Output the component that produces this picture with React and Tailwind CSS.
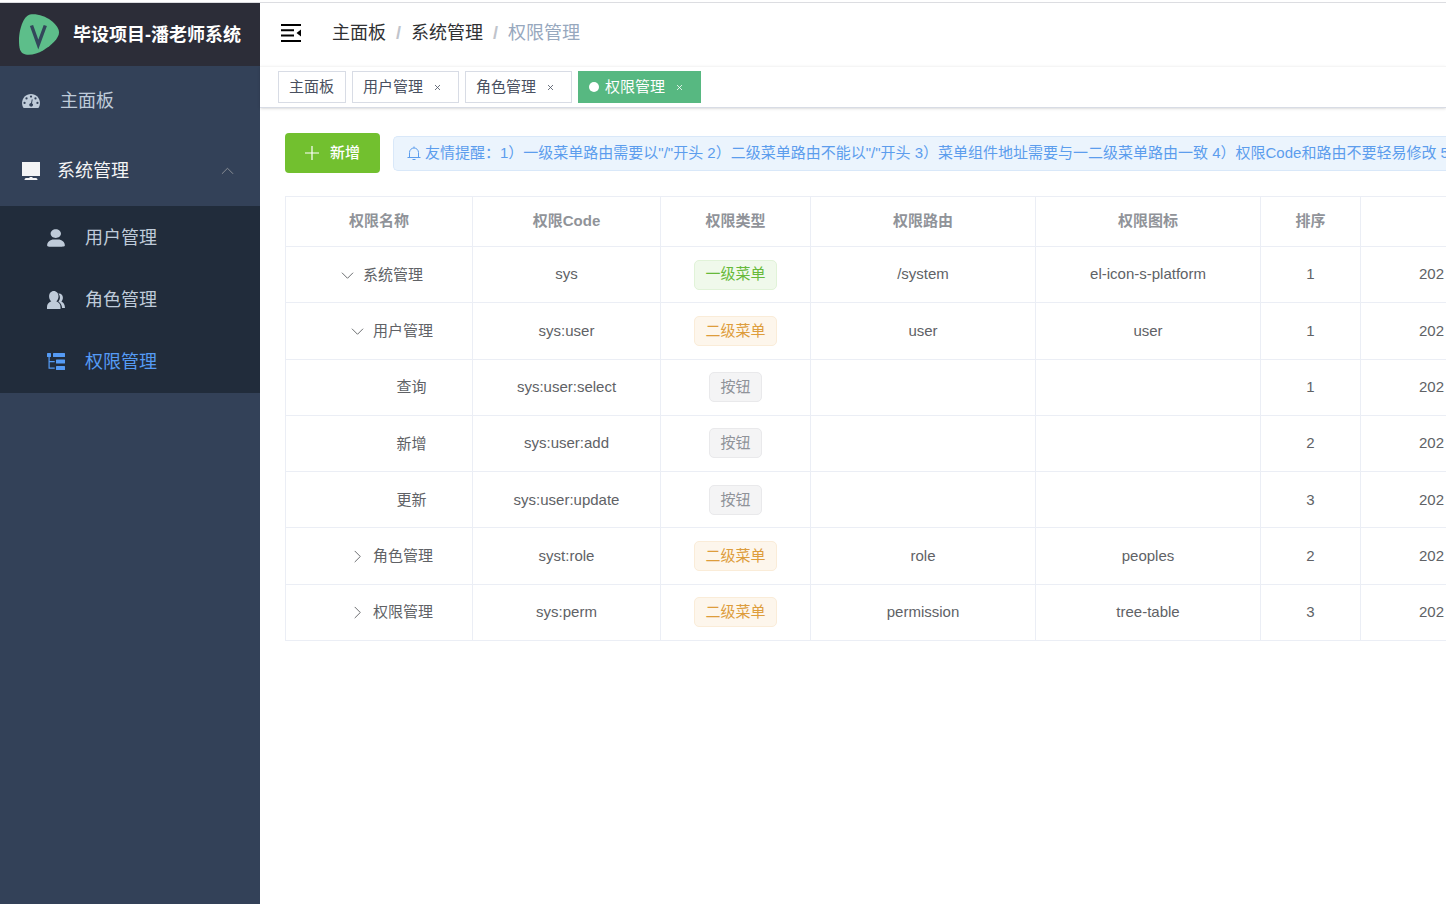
import React, { useState } from 'react';

const subMenus = [
  { name: '用户管理', icon: 'user' },
  { name: '角色管理', icon: 'peoples' },
  { name: '权限管理', icon: 'tree' },
];

const tags = [
  { name: '主面板', affix: true },
  { name: '用户管理' },
  { name: '角色管理' },
  { name: '权限管理' },
];

const permissions = [
  { id: 1, level: 0, open: true, name: '系统管理', code: 'sys', type: 1, path: '/system', icon: 'el-icon-s-platform', sort: 1 },
  { id: 2, level: 1, open: true, name: '用户管理', code: 'sys:user', type: 2, path: 'user', icon: 'user', sort: 1 },
  { id: 3, level: 2, name: '查询', code: 'sys:user:select', type: 3, sort: 1 },
  { id: 4, level: 2, name: '新增', code: 'sys:user:add', type: 3, sort: 2 },
  { id: 5, level: 2, name: '更新', code: 'sys:user:update', type: 3, sort: 3 },
  { id: 6, level: 1, open: false, name: '角色管理', code: 'syst:role', type: 2, path: 'role', icon: 'peoples', sort: 2 },
  { id: 7, level: 1, open: false, name: '权限管理', code: 'sys:perm', type: 2, path: 'permission', icon: 'tree-table', sort: 3 },
];

const types = {
  1: { label: '一级菜单', style: 'bg-[#f0f9eb] border-[#e1f3d8] text-[#67b93a]' },
  2: { label: '二级菜单', style: 'bg-[#fdf6ec] border-[#faecd8] text-[#dd9d3c]' },
  3: { label: '按钮', style: 'bg-[#f4f4f5] border-[#e9e9eb] text-[#909399]' },
};

const indents = ['', 'pl-5', 'pl-10'];

const Logo = () => (
  <svg viewBox="0 0 42 42" className="w-[42px] h-[42px] shrink-0">
    <path
      d="M12 .5C19-.5 27 2 33 6.500c4.500 3.500 8 7.500 8 12C41 24 34 31 25 36.500 19 40 10 42.500 5 39.500 1 37 1 31 1 25 1 17 5 2 12 .5z"
      fill="#5dbe8a"
    />
    <path d="M13.500 11.500L20.300 30.500 27.300 11.500" fill="none" stroke="#33475b" strokeWidth="3.400" />
  </svg>
);

const DashboardIcon = () => (
  <svg viewBox="0 0 128 100" className="w-[18px] h-[14px] shrink-0">
    <path
      d="M64 0C29 0 0 28 0 64c0 12 3.500 24 10 34 1 1.500 2.500 2 4 2h100c1.500 0 3-.5 4-2 6.500-10 10-22 10-34C128 28 99 0 64 0z"
      fill="currentColor"
    />
    <g fill="#334158">
      <circle cx="18" cy="64" r="8" />
      <circle cx="32" cy="32" r="8" />
      <circle cx="64" cy="18" r="8" />
      <circle cx="96" cy="32" r="8" />
      <circle cx="110" cy="64" r="8" />
      <path d="M70 37l6 2-5 28c7 3 9 8 7 14-2 8-9 11-16 9-8-2-12-9-10-16 2-6 6-9 12-10z" />
    </g>
  </svg>
);

const PlatformIcon = () => (
  <svg viewBox="0 0 18 18" className="w-[18px] h-[18px] shrink-0" fill="currentColor">
    <path d="M0 0h18v14H0zM7.500 15h3v1h3.500c1 0 1.500 1 1.500 2h-13c0-1 .5-2 1.500-2h3.500z" />
  </svg>
);

const MenuIcon = ({ type }) => {
  if (type === 'user') {
    return (
      <svg viewBox="0 0 130 130" className="w-[18px] h-[18px] shrink-0" fill="currentColor">
        <path d="M63.444 64.996c20.633 0 37.359-14.308 37.359-31.953 0-17.649-16.726-31.952-37.359-31.952-20.631 0-37.360 14.303-37.360 31.952 0 17.645 16.729 31.953 37.360 31.953zM80.570 75.650H49.434c-26.652 0-48.260 18.477-48.260 41.270v2.664c0 9.316 21.608 9.325 48.260 9.325H80.570c26.649 0 48.256-.344 48.256-9.325v-2.663c0-22.794-21.605-41.271-48.256-41.271z" />
      </svg>
    );
  }
  if (type === 'peoples') {
    return (
      <svg viewBox="0 0 18 18" className="w-[18px] h-[18px] shrink-0" fill="currentColor">
        <path d="M6.800 0c2.700 0 4.700 2.400 4.700 5.400 0 2-.9 3.800-2.200 4.800 2.600.9 4.200 3 4.200 5.800v2H0v-2c0-2.800 1.600-4.900 4.300-5.800C3 9.200 2.100 7.400 2.100 5.400 2.100 2.400 4.100 0 6.800 0z" />
        <path d="M11.300 2.600c3-.2 4.600 1.600 4.600 4.100 0 1.500-.6 2.800-1.500 3.700 2.100.9 3.600 3.200 3.600 6.600h-2.900c-.2-2.800-1.500-4.900-3.700-6.200 1.900-2.200 2.200-5.500-.1-8.200z" />
      </svg>
    );
  }
  return (
    <svg viewBox="0 0 18 18" className="w-[18px] h-[18px] shrink-0" fill="currentColor">
      <rect x="0" y="0" width="4" height="4" rx="0.5" />
      <rect x="6" y="0" width="12" height="4" rx="0.5" />
      <rect x="9" y="6.500" width="9" height="4" rx="0.5" />
      <rect x="9" y="13" width="9" height="4" rx="0.5" />
      <path d="M1.500 4h1.200v4h5v1.200h-5v5.300h5v1.200H1.500z" />
    </svg>
  );
};

const Chevron = ({ dir }) => {
  const points = {
    up: '1,9.500 7,3.500 13,9.500',
    down: '1,4 7,10 13,4',
    right: '4,1 10,7 4,13',
  };
  return (
    <svg viewBox="0 0 14 14" className="w-[13px] h-[13px]" fill="none" stroke="currentColor" strokeWidth="1">
      <polyline points={points[dir]} />
    </svg>
  );
};

const Sidebar = ({ active, setActive }) => (
  <aside className="w-[260px] shrink-0 bg-[#334158] text-[#bfcbd9] text-lg">
    <a href="#/" className="flex items-center gap-[13px] h-[63px] pl-[18px] bg-[#2c2d38] text-white font-bold whitespace-nowrap">
      <Logo />
      <h1>毕设项目-潘老师系统</h1>
    </a>
    <nav>
      <a href="#/dashboard" className="flex items-center gap-5 h-[70px] px-[22px]">
        <DashboardIcon />
        主面板
      </a>
      <button className="flex items-center w-full h-[70px] pl-[22px] pr-[26px] text-[#f4f4f5]">
        <PlatformIcon />
        <span className="ml-[17px]">系统管理</span>
        <span className="ml-auto text-[#909399]">
          <Chevron dir="up" />
        </span>
      </button>
      <ul className="bg-[#212c3b] pt-px">
        {subMenus.map((m) => (
          <li key={m.name}>
            <a
              href="#/system"
              onClick={() => setActive(m.name)}
              className={`flex items-center gap-5 h-[62px] pl-[47px] ${active === m.name ? 'text-[#559bf5]' : ''}`}
            >
              <MenuIcon type={m.icon} />
              {m.name}
            </a>
          </li>
        ))}
      </ul>
    </nav>
  </aside>
);

const Navbar = () => (
  <header className="flex items-center h-[63px] pl-5 pb-[3px] text-lg text-[#303133]">
    <button aria-label="menu" className="mr-[30px] text-black">
      <svg viewBox="0 0 22 20" className="w-[22px] h-5" fill="currentColor">
        <path d="M1 1h20v2H1zM1 6.300h13v2H1zM1 11.600h13v2H1zM1 17h20v2H1zM21 6.500v7L16.500 10z" />
      </svg>
    </button>
    <nav className="flex items-center">
      <a href="#/dashboard">主面板</a>
      <span className="mx-[10px] font-bold text-[#c0c4cc]">/</span>
      <a href="#/system">系统管理</a>
      <span className="mx-[10px] font-bold text-[#c0c4cc]">/</span>
      <span className="text-[#97a8be]">权限管理</span>
    </nav>
  </header>
);

const TagsView = ({ active, setActive }) => (
  <div className="flex gap-[6px] h-[42px] pl-[18px] pt-1 border-t border-[#f5f5f5] border-b border-b-[#d8dce5] shadow">
    {tags.map((t) => {
      const on = t.name === active;
      return (
        <div
          key={t.name}
          className={`flex items-center h-8 border pl-[10px] text-[15px] ${
            on ? 'bg-[#57b881] border-[#57b881] text-white' : 'bg-white border-[#d8dce5] text-[#495060]'
          } ${t.affix ? 'pr-[11px]' : 'pr-[15px]'}`}
        >
          {on && <span className="w-[10px] h-[10px] mr-[6px] rounded-full bg-white" />}
          <a href="#/tag" onClick={() => setActive(t.name)}>{t.name}</a>
          {!t.affix && (
            <button aria-label={t.name} className="ml-[10px] w-[10px] h-[10px]">
              <svg viewBox="0 0 10 10" className="w-[10px] h-[10px]" stroke="currentColor" strokeWidth="0.8">
                <path d="M2 3l5 5M7 3l-5 5" />
              </svg>
            </button>
          )}
        </div>
      );
    })}
  </div>
);

const NameCell = ({ row }) => (
  <span className={`inline-flex items-center align-middle ${indents[row.level]}`}>
    {row.level < 2 ? (
      <button aria-label={row.name} className="flex justify-center w-[25px] mr-[3px]">
        <Chevron dir={row.open ? 'down' : 'right'} />
      </button>
    ) : (
      <span className="w-[25px]" />
    )}
    {row.name}
  </span>
);

const PermissionTable = () => (
  <table className="table-fixed w-[1186px] h-[445px] border-collapse text-[15px] text-center text-[#606266] [&_td]:border [&_th]:border [&_td]:border-[#ebeef5] [&_th]:border-[#ebeef5]">
    <colgroup>
      <col className="w-[187px]" />
      <col className="w-[188px]" />
      <col className="w-[150px]" />
      <col className="w-[225px]" />
      <col className="w-[225px]" />
      <col className="w-[100px]" />
      <col />
    </colgroup>
    <thead>
      <tr className="h-[50px] text-[#909399]">
        <th>权限名称</th>
        <th>权限Code</th>
        <th>权限类型</th>
        <th>权限路由</th>
        <th>权限图标</th>
        <th>排序</th>
        <th />
      </tr>
    </thead>
    <tbody>
      {permissions.map((row) => (
        <tr key={row.id} className="h-14">
          <td><NameCell row={row} /></td>
          <td>{row.code}</td>
          <td>
            <span className={`inline-flex items-center h-[30px] px-[10px] border rounded-[5px] align-middle ${types[row.type].style}`}>
              {types[row.type].label}
            </span>
          </td>
          <td>{row.path}</td>
          <td>{row.icon}</td>
          <td>{row.sort}</td>
          <td className="pl-[58px] text-left">202</td>
        </tr>
      ))}
    </tbody>
  </table>
);

const App = () => {
  const [active, setActive] = useState('权限管理');

  return (
    <div className="flex flex-col min-h-screen bg-white overflow-hidden font-['Liberation_Sans','Noto_Sans_CJK_SC',sans-serif]">
      <div className="h-[3px] border-b border-[#dcdde1]" />
      <div className="flex flex-1">
        <Sidebar active={active} setActive={setActive} />
        <main className="flex-1 min-w-0">
          <Navbar />
          <TagsView active={active} setActive={setActive} />
          <section className="pl-[25px] pt-[25px] overflow-hidden">
            <div className="flex items-center gap-[13px] mb-[23px]">
              <button className="flex items-center h-10 px-5 gap-[11px] shrink-0 rounded bg-[#72c02f] text-white text-[15px] font-medium">
                <svg viewBox="0 0 14 14" className="w-[14px] h-[14px]" stroke="currentColor" strokeWidth="1.200">
                  <path d="M7 0v14M0 7h14" />
                </svg>
                新增
              </button>
              <div className="flex items-center flex-1 h-[35px] pl-[13px] gap-1 border border-r-0 border-[#d9e8f9] rounded-l-[5px] bg-[#ebf4fd] text-[#5c9ded] text-[15px] whitespace-nowrap">
                <svg viewBox="0 0 14 14" className="w-[14px] h-[14px] shrink-0" fill="none" stroke="currentColor" strokeWidth="1">
                  <path d="M.5 11.500h13M2.500 11.500V6.500a4.500 4.500 0 0 1 9 0v5M7 .5v1.500M5.500 13.500h3" />
                </svg>
                <span>
                  友情提醒：1）一级菜单路由需要以"/"开头 2）二级菜单路由不能以"/"开头 3）菜单组件地址需要与一二级菜单路由一致 4）权限Code和路由不要轻易修改 5
                </span>
              </div>
            </div>
            <PermissionTable />
          </section>
        </main>
      </div>
    </div>
  );
};

export default App;
